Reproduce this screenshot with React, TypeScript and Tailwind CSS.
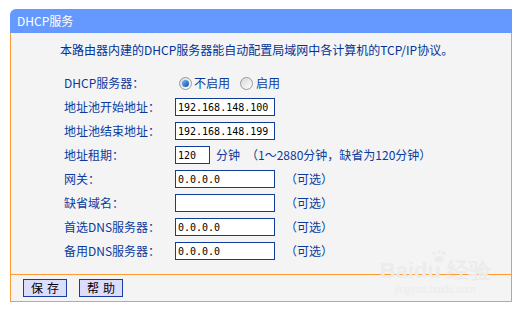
import React from "react";

const rows = [
  { label: "地址池开始地址：", value: "192.168.148.100" },
  { label: "地址池结束地址：", value: "192.168.148.199" },
];

const optional = [
  { label: "网关：", value: "0.0.0.0" },
  { label: "缺省域名：", value: "" },
  { label: "首选DNS服务器：", value: "0.0.0.0" },
  { label: "备用DNS服务器：", value: "0.0.0.0" },
];

const Radio: React.FC<{ checked?: boolean }> = ({ checked }) => (
  <span className="w-[13px] h-[13px] rounded-full border border-[#9a9a9a] bg-gradient-to-br from-[#d8d8d8] to-[#ffffff] flex items-center justify-center shrink-0">
    {checked && <span className="w-[7px] h-[7px] rounded-full bg-gradient-to-br from-[#6fb8ff] to-[#0b4fa8]" />}
  </span>
);

const Field: React.FC<{ value: string }> = ({ value }) => (
  <div className="w-[100px] h-[18px] border border-[#123c9c] bg-white px-[2px] flex items-center font-['DejaVu_Sans_Mono',monospace] text-[10px] text-black">
    {value}
  </div>
);

export default function App() {
  return (
    <div className="w-[524px] h-[311px] bg-white pt-[9px] pl-[10px] font-['Noto_Sans_CJK_SC',sans-serif] text-[12px] text-[#0d3a9c]">
      <div className="w-[502px]">
        <div className="h-[24px] bg-[#6699ff] rounded-tl-[6px] text-white flex items-center pl-[7px]">DHCP服务</div>
        <div className="bg-[#f4f4f4] border-x border-b border-[#ff9933] relative">
          <div className="pt-[5px] pb-[11px]">
            <div className="h-[24px] flex items-center pl-[49px] text-[#003399]">
              本路由器内建的DHCP服务器能自动配置局域网中各计算机的TCP/IP协议。
            </div>
            <div className="mt-[9px] pl-[53px]">
              <div className="h-[24px] flex items-center">
                <div className="w-[111px]">DHCP服务器：</div>
                <div className="flex items-center pl-[4px]">
                  <Radio checked />
                  <span className="ml-[2px]">不启用</span>
                  <span className="ml-[10px]"><Radio /></span>
                  <span className="ml-[3px]">启用</span>
                </div>
              </div>
              {rows.map((r) => (
                <div key={r.label} className="h-[24px] flex items-center">
                  <div className="w-[111px]">{r.label}</div>
                  <Field value={r.value} />
                </div>
              ))}
              <div className="h-[24px] flex items-center">
                <div className="w-[111px]">地址租期：</div>
                <div className="w-[35px] h-[18px] border border-[#123c9c] bg-white px-[2px] flex items-center font-['DejaVu_Sans_Mono',monospace] text-[10px] text-black">120</div>
                <span className="ml-[6px]">分钟</span>
                <span className="ml-[6px]">（1～2880分钟，缺省为120分钟）</span>
              </div>
              {optional.map((r) => (
                <div key={r.label} className="h-[24px] flex items-center">
                  <div className="w-[111px]">{r.label}</div>
                  <Field value={r.value} />
                  <span className="ml-[10px]">（可选）</span>
                </div>
              ))}
            </div>
          </div>
          <div className="border-t border-[#ff9933] h-[27px] flex items-center gap-[12px] pl-[12px]">
            <button className="w-[44px] h-[18px] bg-[#dcdcfc] border border-[#1a3c9c] text-black text-[12px] leading-none tracking-[4px] pl-[4px]">保存</button>
            <button className="w-[44px] h-[18px] bg-[#dcdcfc] border border-[#1a3c9c] text-black text-[12px] leading-none tracking-[4px] pl-[4px]">帮助</button>
          </div>
          {/* watermark */}
          <div className="absolute right-[20px] bottom-[6px] flex flex-col items-center text-[#ececec] leading-none select-none pointer-events-none">
            <svg width="20" height="12" viewBox="0 0 20 12" className="mb-[-2px] ml-[8px]">
              <circle cx="5" cy="3" r="2" fill="#ececec" />
              <circle cx="10" cy="2" r="2" fill="#ececec" />
              <circle cx="15" cy="3" r="2" fill="#ececec" />
              <ellipse cx="10" cy="9" rx="5" ry="3" fill="#ececec" />
            </svg>
            <span className="font-['Liberation_Sans',sans-serif] font-bold text-[22px]">Baidu 经验</span>
            <span className="font-['Liberation_Sans',sans-serif] text-[10px] mt-[3px]">jingyan.baidu.com</span>
          </div>
        </div>
      </div>
    </div>
  );
}
